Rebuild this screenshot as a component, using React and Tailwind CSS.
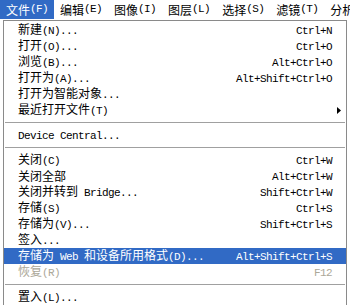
import React from 'react';

const menuBar = ['文件(F)', '编辑(E)', '图像(I)', '图层(L)', '选择(S)', '滤镜(T)', '分析'];

const items = [
  { label: '新建(N)...', key: 'Ctrl+N' },
  { label: '打开(O)...', key: 'Ctrl+O' },
  { label: '浏览(B)...', key: 'Alt+Ctrl+O' },
  { label: '打开为(A)...', key: 'Alt+Shift+Ctrl+O' },
  { label: '打开为智能对象...' },
  { label: '最近打开文件(T)', sub: true },
  { sep: true },
  { label: 'Device Central...' },
  { sep: true },
  { label: '关闭(C)', key: 'Ctrl+W' },
  { label: '关闭全部', key: 'Alt+Ctrl+W' },
  { label: '关闭并转到 Bridge...', key: 'Shift+Ctrl+W' },
  { label: '存储(S)', key: 'Ctrl+S' },
  { label: '存储为(V)...', key: 'Shift+Ctrl+S' },
  { label: '签入...' },
  { label: '存储为 Web 和设备所用格式(D)...', key: 'Alt+Shift+Ctrl+S', active: true },
  { label: '恢复(R)', key: 'F12', disabled: true },
  { sep: true },
  { label: '置入(L)...' },
];

// latin runs get a narrow mono face so they sit at half the CJK width
const Txt = ({ s }) =>
  s
    .split(/([\x20-\x7e]+)/)
    .filter(Boolean)
    .map((p, i) =>
      /^[\x20-\x7e]+$/.test(p) ? (
        <span key={i} className="font-['Liberation_Mono'] text-[11px] tracking-[-0.6px]">
          {p}
        </span>
      ) : (
        <span key={i}>{p}</span>
      )
    );

const App = () => {
  return (
    <div className="w-[350px] h-[305px] overflow-hidden bg-white text-[12px] leading-none text-black font-['Noto_Sans_CJK_SC',sans-serif] whitespace-pre">
      <div className="flex h-[20px]">
        {menuBar.map((m, i) => (
          <div
            key={m}
            className={`flex items-center h-[19px] px-[6px] ${i === 0 ? 'bg-[#316ac5] text-white' : ''}`}
          >
            <Txt s={m} />
          </div>
        ))}
      </div>

      <div className="ml-[3px] w-[344px] border-x border-t border-[#8a8a8a] pt-[1px] bg-white">
        {items.map((it, i) =>
          it.sep ? (
            <div key={i} className="h-[9px] pt-[4px] px-[1px]">
              <div className="border-t border-[#a0a0a0] border-b border-b-white" />
            </div>
          ) : (
            <div
              key={i}
              className={`flex items-center h-[16px] pl-[14px] ${
                it.active ? 'bg-[#316ac5] text-white' : it.disabled ? 'text-[#aca899]' : ''
              }`}
            >
              <div className="flex-1">
                <Txt s={it.label} />
              </div>
              {it.key && (
                <div>
                  <Txt s={it.key} />
                </div>
              )}
              <div className="w-[14px] flex justify-center">
                {it.sub && (
                  <svg width="4" height="7" viewBox="0 0 4 7">
                    <path d="M0 0 L4 3.5 L0 7 Z" fill="#000" />
                  </svg>
                )}
              </div>
            </div>
          )
        )}
      </div>
    </div>
  );
};

export default App;
